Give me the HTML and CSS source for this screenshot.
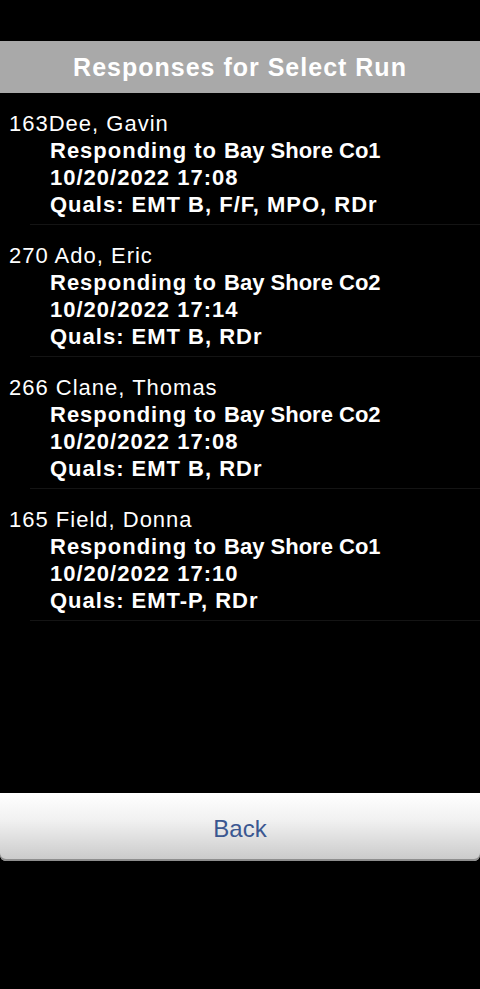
FILE: index.html
```html
<!DOCTYPE html>
<html lang="en">
    <head>
        <meta charset="UTF-8" />
        <meta name="viewport" content="width=device-width, initial-scale=1.0" />
        <title>Responses for Select Run</title>
        <link rel="stylesheet" href="styles.css">
    </head>
    <body>
        <header class="title-bar">
            <h1>Responses for Select Run</h1>
        </header>

        <ul class="responses">
            <li class="response">
                <p class="name"><span class="unit">163</span>Dee, Gavin</p>
                <p>Responding to <span class="station">Bay Shore Co1</span></p>
                <p>10/20/2022 17:08</p>
                <p>Quals: EMT B, F/F, MPO, RDr</p>
            </li>
            <li class="response">
                <p class="name"><span class="unit">270</span> Ado, Eric</p>
                <p>Responding to <span class="station">Bay Shore Co2</span></p>
                <p>10/20/2022 17:14</p>
                <p>Quals: EMT B, RDr</p>
            </li>
            <li class="response">
                <p class="name"><span class="unit">266</span> Clane, Thomas</p>
                <p>Responding to <span class="station">Bay Shore Co2</span></p>
                <p>10/20/2022 17:08</p>
                <p>Quals: EMT B, RDr</p>
            </li>
            <li class="response">
                <p class="name"><span class="unit">165</span> Field, Donna</p>
                <p>Responding to <span class="station">Bay Shore Co1</span></p>
                <p>10/20/2022 17:10</p>
                <p>Quals: EMT-P, RDr</p>
            </li>
        </ul>

        <button class="back-btn" type="button">Back</button>
    </body>
</html>
```

FILE: styles.css
```css
* {
    margin: 0;
    padding: 0;
    box-sizing: border-box;
}
html {
    font-family: 'Liberation Sans', Arial, sans-serif;
}
body {
    background: #000;
    color: #fff;
    min-height: 100vh;
    padding-top: 41px;
}
.title-bar {
    height: 52px;
    background: #a9a9a9;
    display: flex;
    align-items: center;
    justify-content: center;
}
.title-bar h1 {
    font-size: 25px;
    font-weight: 700;
    color: #fff;
    letter-spacing: 1px;
}
.responses {
    list-style: none;
    height: 700px;
}
.response {
    height: 132px;
    padding-top: 17px;
    margin-left: 30px;
    border-bottom: 1px solid #141414;
}
.response p {
    font-size: 22px;
    line-height: 27px;
    font-weight: 700;
    letter-spacing: 1px;
    white-space: nowrap;
    margin-left: 20px;
}
.response p.name {
    font-weight: 400;
    margin-left: -21px;
}
.response .station {
    letter-spacing: 0;
}
.back-btn {
    display: block;
    width: 100%;
    height: 68px;
    padding-top: 3px;
    border: none;
    border-radius: 0 0 6px 6px;
    background: linear-gradient(180deg, #ffffff 0%, #f1f1f1 40%, #c9c9c9 100%);
    box-shadow: inset 0 -2px 0 #8e8e8e;
    color: #3a5791;
    font-family: 'Liberation Sans', Arial, sans-serif;
    font-size: 24px;
    cursor: pointer;
}
```
